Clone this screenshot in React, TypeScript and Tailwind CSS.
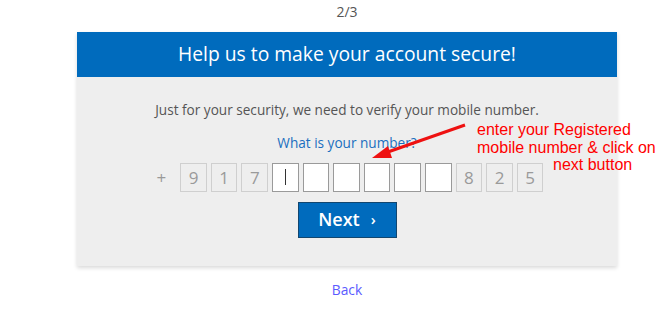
import React from "react";

export default function App() {
  const pre = ["9", "1", "7"];
  const post = ["8", "2", "5"];
  const disabledBox =
    "w-[26.6px] h-[28.6px] border border-[#cfcfcf] bg-[#eeeeee] flex items-center justify-center text-[17px] text-[#9a9a9a]";
  const emptyBox = "w-[26.6px] h-[28.6px] border border-[#9a9a9a] bg-white flex items-center justify-center";
  return (
    <div className="relative w-[662px] h-[324px] bg-white overflow-hidden" style={{ fontFamily: "'Open Sans', sans-serif" }}>
      <div className="ml-[77px] w-[540px] flex flex-col items-center">
        <div className="h-[32px] pt-[3px] text-[14px] text-[#555] leading-[18px]">2/3</div>
        <div className="w-full shadow-[0_2px_4px_rgba(0,0,0,0.15)]">
          <div className="h-[45px] bg-[#006bbd] flex items-center justify-center text-white text-[19.3px] font-medium">
            Help us to make your account secure!
          </div>
          <div className="bg-[#eeeeee] flex flex-col items-center pt-[24px] pb-[28px]">
            <div className="text-[13.6px] text-[#555] leading-[18px]">
              Just for your security, we need to verify your mobile number.
            </div>
            <div className="mt-[15px] text-[13.6px] text-[#1a6fc0] font-medium leading-[18px]">What is your number?</div>
            <div className="mt-[11px] ml-[6px] flex items-center gap-[4px]">
              <span className="text-[17px] text-[#999] mr-[10px]">+</span>
              {pre.map((d, i) => (
                <div key={"a" + i} className={disabledBox}>{d}</div>
              ))}
              <div className={emptyBox}>
                <div className="w-px h-[16px] bg-[#333]" />
              </div>
              {[0, 1, 2, 3, 4].map((i) => (
                <div key={"e" + i} className={emptyBox} />
              ))}
              {post.map((d, i) => (
                <div key={"b" + i} className={disabledBox}>{d}</div>
              ))}
            </div>
            <button className="mt-[10px] w-[99px] h-[36px] bg-[#006bbd] border border-[#12466f] text-white text-[18px] font-semibold flex items-center justify-center gap-[11px]">
              Next <span className="text-[15px]">›</span>
            </button>
          </div>
        </div>
        <div className="mt-[14px] text-[13.8px] text-[#5b5bff]">Back</div>
      </div>
      <svg className="absolute left-0 top-0" width="662" height="324">
        <line x1="465" y1="125" x2="385" y2="153" stroke="#ee1111" strokeWidth="3" />
        <polygon points="372,158 388,146 392,158" fill="#ee1111" />
      </svg>
      <div
        className="absolute left-[477px] top-[121px] text-[16px] leading-[17.5px] text-[#ff0000]"
        style={{ fontFamily: "'Liberation Sans', sans-serif" }}
      >
        <div>enter your Registered</div>
        <div>mobile number &amp; click on</div>
        <div className="pl-[76px]">next button</div>
      </div>
    </div>
  );
}
